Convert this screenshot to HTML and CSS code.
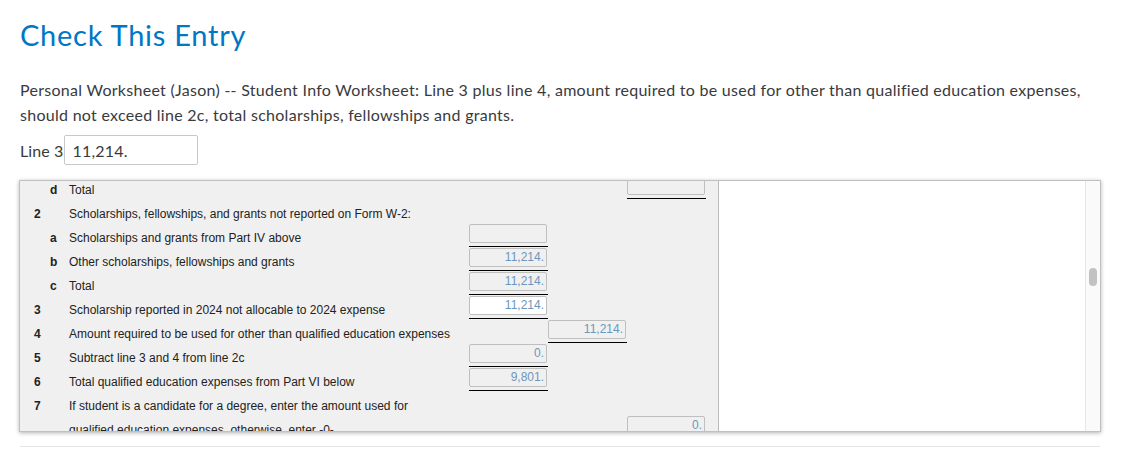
FILE: index.html
```html
<!DOCTYPE html>
<html lang="en">
<head>
    <meta charset="UTF-8">
    <meta name="viewport" content="width=device-width, initial-scale=1.0">
    <title>Check This Entry</title>
    <link rel="stylesheet" href="styles.css">
</head>
<body>
    <h1 class="title">Check This Entry</h1>
    <p class="message">Personal Worksheet (Jason) -- Student Info Worksheet: Line 3 plus line 4, amount required to be used for other than qualified education expenses, should not exceed line 2c, total scholarships, fellowships and grants.</p>
    <div class="entry">
        <label class="entry-label" for="line3">Line 3</label>
        <input id="line3" class="entry-input" type="text" value="11,214.">
    </div>

    <div class="worksheet">
        <div class="sheet">
            <div class="rows">
                <div class="row">
                    <span class="num"></span><span class="letter">d</span><span class="desc">Total</span>
                    <span class="amt"></span><span class="amt"></span>
                    <span class="amt ruled"><span class="box"></span></span>
                </div>
                <div class="row">
                    <span class="num">2</span><span class="letter"></span><span class="desc">Scholarships, fellowships, and grants not reported on Form W-2:</span>
                </div>
                <div class="row">
                    <span class="num"></span><span class="letter">a</span><span class="desc">Scholarships and grants from Part IV above</span>
                    <span class="amt ruled"><span class="box"></span></span>
                </div>
                <div class="row">
                    <span class="num"></span><span class="letter">b</span><span class="desc">Other scholarships, fellowships and grants</span>
                    <span class="amt ruled"><span class="box">11,214.</span></span>
                </div>
                <div class="row">
                    <span class="num"></span><span class="letter">c</span><span class="desc">Total</span>
                    <span class="amt ruled"><span class="box">11,214.</span></span>
                </div>
                <div class="row">
                    <span class="num">3</span><span class="letter"></span><span class="desc">Scholarship reported in 2024 not allocable to 2024 expense</span>
                    <span class="amt ruled"><span class="box active">11,214.</span></span>
                </div>
                <div class="row">
                    <span class="num">4</span><span class="letter"></span><span class="desc">Amount required to be used for other than qualified education expenses</span>
                    <span class="amt"></span>
                    <span class="amt ruled"><span class="box">11,214.</span></span>
                </div>
                <div class="row">
                    <span class="num">5</span><span class="letter"></span><span class="desc">Subtract line 3 and 4 from line 2c</span>
                    <span class="amt ruled"><span class="box">0.</span></span>
                </div>
                <div class="row">
                    <span class="num">6</span><span class="letter"></span><span class="desc">Total qualified education expenses from Part VI below</span>
                    <span class="amt ruled"><span class="box">9,801.</span></span>
                </div>
                <div class="row">
                    <span class="num">7</span><span class="letter"></span><span class="desc">If student is a candidate for a degree, enter the amount used for</span>
                </div>
                <div class="row">
                    <span class="num"></span><span class="letter"></span><span class="desc">qualified education expenses, otherwise, enter -0-</span>
                    <span class="amt"></span><span class="amt"></span>
                    <span class="amt ruled"><span class="box">0.</span></span>
                </div>
            </div>
        </div>
        <div class="preview">
            <div class="scrollbar"><div class="thumb"></div></div>
        </div>
    </div>
    <hr class="divider">
</body>
</html>
```

FILE: styles.css
```css
body {
    margin: 0;
    padding: 0 20px;
    background-color: #fff;
    font-family: Lato, "Open Sans", sans-serif;
    color: #393a3d;
}
.title {
    margin: 17px 0 0;
    font-size: 29px;
    line-height: 36px;
    font-weight: 400;
    letter-spacing: 0.75px;
    color: #0077c5;
}
.message {
    margin: 24px 0 0;
    font-size: 16px;
    line-height: 25px;
    letter-spacing: 0.28px;
}
.entry {
    display: flex;
    align-items: center;
    gap: 1px;
    margin-top: 8px;
    font-size: 16px;
    letter-spacing: 0.1px;
}
.entry-input {
    box-sizing: border-box;
    width: 134px;
    height: 30px;
    padding: 0 7px;
    border: 1px solid #c8c8c8;
    border-radius: 2px;
    font-family: inherit;
    font-size: 16px;
    letter-spacing: 0.2px;
    color: #393a3d;
}
.worksheet {
    display: flex;
    box-sizing: border-box;
    width: 1082px;
    height: 252px;
    margin: 15px 0 0 -1px;
    border: 1px solid #c0c0c0;
    box-shadow: 0 1px 4px rgba(0, 0, 0, 0.3);
    overflow: hidden;
}
.sheet {
    width: 699px;
    background-color: #f0f0f0;
    border-right: 1px solid #bcbcbc;
    box-sizing: border-box;
    overflow: hidden;
    font-family: "Liberation Sans", Arial, sans-serif;
    font-size: 12px;
    color: #222;
}
.rows {
    margin-top: -5px;
    padding-left: 14px;
}
.row {
    display: grid;
    grid-template-columns: 16px 19px 400px 79px 79px 79px;
    align-items: start;
    height: 24px;
}
.num,
.letter,
.desc {
    padding-top: 5px;
    line-height: 19px;
    white-space: nowrap;
}
.num,
.letter {
    font-weight: bold;
}
.amt {
    box-sizing: border-box;
    height: 23px;
}
.amt.ruled {
    border-bottom: 1px solid #000;
}
.box {
    display: block;
    box-sizing: border-box;
    width: 78px;
    height: 19px;
    padding-right: 2px;
    border: 1px solid #bfbfbf;
    border-radius: 2px;
    text-align: right;
    line-height: 17px;
    color: #6b97bd;
}
.box.active {
    background-color: #fff;
}
.preview {
    flex: 1;
    display: flex;
    justify-content: flex-end;
    background-color: #fff;
}
.scrollbar {
    box-sizing: border-box;
    width: 15px;
    padding: 87px 0 0 3px;
    background-color: #fafafa;
    border-left: 1px solid #e6e6e6;
}
.thumb {
    width: 8px;
    height: 18px;
    border-radius: 4px;
    background-color: #c2c2c2;
}
.divider {
    width: 1080px;
    margin: 14px 0 0;
    border: none;
    border-top: 1px solid #e6e6e6;
}
```
